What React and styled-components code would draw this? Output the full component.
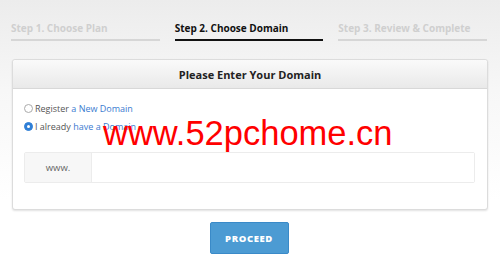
import React from 'react';
import styled, { createGlobalStyle } from 'styled-components';

const Global = createGlobalStyle`
  html, body { margin: 0; padding: 0; }
  body {
    width: 500px;
    height: 270px;
    overflow: hidden;
    font-family: "Open Sans", "Liberation Sans", sans-serif;
    background: linear-gradient(to bottom, #ececec 0px, #f7f7f7 90px, #ffffff 200px);
  }
`;

const Page = styled.div`
  position: relative;
  padding: 19px 12px 0 11px;
`;

const Steps = styled.div`
  display: grid;
  grid-template-columns: repeat(3, 1fr);
  column-gap: 15px;
  margin-right: 1px;
`;

const Step = styled.div`
  font-size: 10px;
  font-weight: 700;
  color: ${p => (p.$active ? '#111' : '#cfcfcf')};
  padding-bottom: 2px;
  line-height: 18px;
  border-bottom: 2px solid ${p => (p.$active ? '#111' : '#d6d6d6')};
`;

const Card = styled.div`
  margin-top: 18px;
  margin-left: 1px;
  background: #fff;
  border: 1px solid #dcdcdc;
  border-radius: 3px;
  box-shadow: 0 1px 2px rgba(0, 0, 0, 0.12);
`;

const CardHead = styled.div`
  height: 28px;
  display: flex;
  align-items: center;
  justify-content: center;
  font-size: 11px;
  font-weight: 700;
  color: #222;
  background: linear-gradient(to bottom, #fafafa, #e9e9e9);
  border-bottom: 1px solid #d8d8d8;
  border-radius: 3px 3px 0 0;
`;

const CardBody = styled.div`
  padding: 10px 12px 26px 11px;
`;

const Option = styled.label`
  display: flex;
  align-items: center;
  gap: 2px;
  font-size: 9px;
  color: #555;
  height: 18px;
`;

const Radio = styled.span`
  width: 9px;
  height: 9px;
  border-radius: 50%;
  box-sizing: border-box;
  border: 1px solid ${p => (p.$on ? '#2f7fd6' : '#aaa')};
  background: ${p => (p.$on ? '#2f7fd6' : '#fff')};
  display: inline-flex;
  align-items: center;
  justify-content: center;
  &::after {
    content: '';
    width: 3px;
    height: 3px;
    border-radius: 50%;
    background: ${p => (p.$on ? '#fff' : 'transparent')};
  }
`;

const Link = styled.span`
  color: #3b7bd0;
`;

const InputGroup = styled.div`
  display: flex;
  height: 29px;
  margin-top: 17px;
  border: 1px solid #ececec;
  border-radius: 2px;
`;

const Addon = styled.div`
  width: 66px;
  display: flex;
  align-items: center;
  justify-content: center;
  background: #f7f7f7;
  border-right: 1px solid #ececec;
  font-size: 9.5px;
  color: #666;
`;

const Field = styled.div`
  flex: 1;
  background: #fff;
`;

const Actions = styled.div`
  display: flex;
  justify-content: center;
  margin-top: 12px;
  padding-right: 1px;
`;

const Button = styled.button`
  width: 79px;
  height: 32px;
  background: #4c9bd3;
  border: 1px solid #3a8ac8;
  border-radius: 2px;
  color: #fff;
  font-family: "Open Sans", "Liberation Sans", sans-serif;
  font-weight: 800;
  font-size: 9.5px;
  letter-spacing: 0.6px;
  padding: 0;
`;

const Watermark = styled.div`
  position: absolute;
  left: 103px;
  top: 113px;
  font-family: "Liberation Sans", Arial, sans-serif;
  font-size: 34.5px;
  color: #ff0000;
  line-height: 40px;
  white-space: nowrap;
`;

export default function App() {
  return (
    <>
      <Global />
      <Page>
        <Steps>
          <Step>Step 1. Choose Plan</Step>
          <Step $active>Step 2. Choose Domain</Step>
          <Step>Step 3. Review &amp; Complete</Step>
        </Steps>
        <Card>
          <CardHead>Please Enter Your Domain</CardHead>
          <CardBody>
            <Option>
              <Radio />
              <span>Register <Link>a New Domain</Link></span>
            </Option>
            <Option>
              <Radio $on />
              <span>I already <Link>have a Domain</Link></span>
            </Option>
            <InputGroup>
              <Addon>www.</Addon>
              <Field />
            </InputGroup>
          </CardBody>
        </Card>
        <Actions>
          <Button>PROCEED</Button>
        </Actions>
        <Watermark>www.52pchome.cn</Watermark>
      </Page>
    </>
  );
}
